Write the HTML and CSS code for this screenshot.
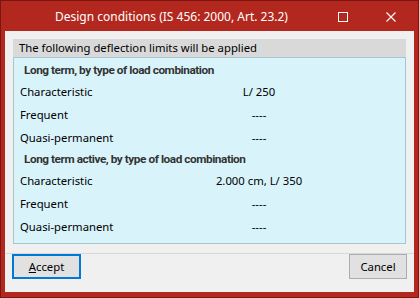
FILE: index.html
```html
<!DOCTYPE html>
<html>
<head>
<meta charset="utf-8">
<link rel="stylesheet" href="styles.css">
</head>
<body>
<div class="window">
  <div class="titlebar">
    <div class="title">Design conditions (IS 456: 2000, Art. 23.2)</div>
    <div class="controls">
      <span class="ctl"><svg width="10" height="10" viewBox="0 0 10 10"><rect x="0.5" y="0.5" width="9" height="9" fill="none" stroke="#fff" stroke-width="1"/></svg></span>
      <span class="ctl"><svg width="10" height="10" viewBox="0 0 10 10"><path d="M0.5 0.5 L9.5 9.5 M9.5 0.5 L0.5 9.5" stroke="#fff" stroke-width="1.1" fill="none"/></svg></span>
    </div>
  </div>
  <div class="client">
    <div class="group">
      <div class="group-head">The following deflection limits will be applied</div>
      <div class="group-body">
        <div class="heading">Long term, by type of load combination</div>
        <div class="row"><span class="label">Characteristic</span><span class="value">L/ 250</span></div>
        <div class="row"><span class="label">Frequent</span><span class="value">----</span></div>
        <div class="row"><span class="label">Quasi-permanent</span><span class="value">----</span></div>
        <div class="heading">Long term active, by type of load combination</div>
        <div class="row"><span class="label">Characteristic</span><span class="value">2.000 cm, L/ 350</span></div>
        <div class="row"><span class="label">Frequent</span><span class="value">----</span></div>
        <div class="row"><span class="label">Quasi-permanent</span><span class="value">----</span></div>
      </div>
    </div>
    <div class="separator"></div>
    <div class="buttons">
      <button class="btn btn-default"><u>A</u>ccept</button>
      <button class="btn">Cancel</button>
    </div>
  </div>
</div>
</body>
</html>
```

FILE: styles.css
```css
* { box-sizing: border-box; }
html, body { margin: 0; padding: 0; }
body {
  width: 419px;
  height: 298px;
  font-family: "Noto Sans", sans-serif;
  font-size: 11.3px;
  color: #000;
  background: #fff;
}
.window {
  width: 419px;
  height: 298px;
  border: 1px solid #7c1410;
  background: #b2281e;
  display: flex;
  flex-direction: column;
  padding: 0 4px 5px 4px;
}
.titlebar {
  height: 30px;
  display: flex;
  align-items: center;
  color: #fff;
  flex: none;
}
.title {
  flex: 1;
  padding-left: 50px;
  font-size: 12px;
  line-height: 16px;
  margin-top: 2px;
}
.controls {
  display: flex;
  align-items: center;
  gap: 38px;
  padding-right: 18px;
  margin-top: 1px;
}
.ctl { display: flex; width: 10px; height: 10px; }
.client {
  flex: 1;
  background: #f0f0f0;
  display: flex;
  flex-direction: column;
  padding: 8px 8px 0 8px;
}
.group { display: flex; flex-direction: column; }
.group-head {
  height: 18px;
  background: #d9d9d9;
  padding-left: 6px;
  line-height: 18px;
}
.group-body {
  height: 187px;
  background: #d9f3fb;
  border: 1px solid #a9c5d0;
  padding-top: 2px;
}
.heading {
  height: 20px;
  line-height: 20px;
  font-family: "Roboto", "Noto Sans", sans-serif;
  font-size: 11.8px;
  letter-spacing: -0.45px;
  font-weight: bold;
  padding-left: 10px;
  color: #333;
}
.row {
  height: 23px;
  display: grid;
  grid-template-columns: 150px 178px;
  align-items: center;
  padding-left: 6px;
}
.value { text-align: center; }
.separator {
  margin: 9px -8px 0 -8px;
  height: 1px;
  background: #d8d8d8;
}
.buttons {
  display: flex;
  justify-content: space-between;
  padding: 7px 0 0 -1px;
  margin: 0 -1px;
}
.btn {
  height: 25px;
  font-family: inherit;
  font-size: 11.3px;
  background: #e1e1e1;
  border: 1px solid #adadad;
  color: #000;
  padding: 0;
  width: 58px;
}
.btn-default {
  width: 69px;
  border: 2px solid #0078d7;
}
.btn u { text-decoration: underline; }
```
